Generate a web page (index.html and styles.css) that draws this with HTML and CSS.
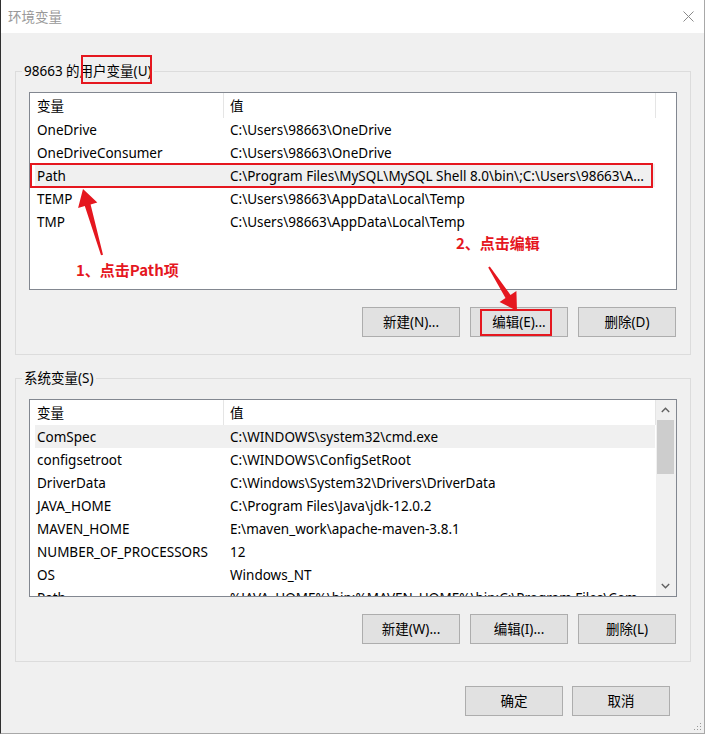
FILE: index.html
```html
<!DOCTYPE html>
<html lang="zh-CN">
<head>
<meta charset="utf-8">
<title>环境变量</title>
<link rel="stylesheet" href="styles.css">
</head>
<body>
<div class="window">
  <div class="titlebar">
    <span class="title">环境变量</span>
    <svg class="close" width="11" height="11" viewBox="0 0 11 11"><path d="M0.5 0.5 L10.5 10.5 M10.5 0.5 L0.5 10.5" stroke="#8a8a8a" stroke-width="1" fill="none"/></svg>
  </div>

  <div class="client">
    <fieldset class="group">
      <legend>98663 的用户变量(U)</legend>
      <div class="list">
        <div class="list-main">
          <div class="list-head">
            <div class="hcell name">变量</div>
            <div class="hcell value">值</div>
          </div>
          <div class="row"><div class="cell name">OneDrive</div><div class="cell value">C:\Users\98663\OneDrive</div></div>
          <div class="row"><div class="cell name">OneDriveConsumer</div><div class="cell value">C:\Users\98663\OneDrive</div></div>
          <div class="row selected"><div class="cell name">Path</div><div class="cell value">C:\Program Files\MySQL\MySQL Shell 8.0\bin\;C:\Users\98663\AppData\Local\Microsoft\WindowsApps;</div></div>
          <div class="row"><div class="cell name">TEMP</div><div class="cell value">C:\Users\98663\AppData\Local\Temp</div></div>
          <div class="row"><div class="cell name">TMP</div><div class="cell value">C:\Users\98663\AppData\Local\Temp</div></div>
        </div>
      </div>
      <div class="buttons">
        <button class="btn">新建(N)...</button>
        <button class="btn">编辑(E)...</button>
        <button class="btn">删除(D)</button>
      </div>
    </fieldset>

    <fieldset class="group system">
      <legend>系统变量(S)</legend>
      <div class="list">
        <div class="list-main">
          <div class="list-head">
            <div class="hcell name">变量</div>
            <div class="hcell value">值</div>
          </div>
          <div class="row selected"><div class="cell name">ComSpec</div><div class="cell value">C:\WINDOWS\system32\cmd.exe</div></div>
          <div class="row"><div class="cell name">configsetroot</div><div class="cell value">C:\WINDOWS\ConfigSetRoot</div></div>
          <div class="row"><div class="cell name">DriverData</div><div class="cell value">C:\Windows\System32\Drivers\DriverData</div></div>
          <div class="row"><div class="cell name">JAVA_HOME</div><div class="cell value">C:\Program Files\Java\jdk-12.0.2</div></div>
          <div class="row"><div class="cell name">MAVEN_HOME</div><div class="cell value">E:\maven_work\apache-maven-3.8.1</div></div>
          <div class="row"><div class="cell name">NUMBER_OF_PROCESSORS</div><div class="cell value">12</div></div>
          <div class="row"><div class="cell name">OS</div><div class="cell value">Windows_NT</div></div>
          <div class="row"><div class="cell name">Path</div><div class="cell value">%JAVA_HOME%\bin;%MAVEN_HOME%\bin;C:\Program Files\Common Files\Oracle\Java\javapath;C:\WINDOWS</div></div>
        </div>
        <div class="scrollbar">
          <div class="sb-btn">
            <svg width="9" height="6" viewBox="0 0 9 6"><path d="M0.8 5 L4.5 1.3 L8.2 5" stroke="#606060" stroke-width="1.4" fill="none"/></svg>
          </div>
          <div class="sb-track"><div class="sb-thumb"></div></div>
          <div class="sb-btn">
            <svg width="9" height="6" viewBox="0 0 9 6"><path d="M0.8 1 L4.5 4.7 L8.2 1" stroke="#606060" stroke-width="1.4" fill="none"/></svg>
          </div>
        </div>
      </div>
      <div class="buttons">
        <button class="btn">新建(W)...</button>
        <button class="btn">编辑(I)...</button>
        <button class="btn">删除(L)</button>
      </div>
    </fieldset>

    <div class="actions">
      <button class="btn">确定</button>
      <button class="btn">取消</button>
    </div>
  </div>

  <svg class="grip" width="10" height="10" viewBox="0 0 10 10">
    <rect x="8" y="2" width="1" height="1" fill="#999"/>
    <rect x="5" y="5" width="1" height="1" fill="#999"/>
    <rect x="8" y="5" width="1" height="1" fill="#999"/>
    <rect x="2" y="8" width="1" height="1" fill="#999"/>
    <rect x="5" y="8" width="1" height="1" fill="#999"/>
    <rect x="8" y="8" width="1" height="1" fill="#999"/>
  </svg>

  <!-- red guide marks drawn over the dialog -->
  <div class="notes">
    <div class="mark mark-legend"></div>
    <div class="mark mark-path"></div>
    <div class="mark mark-edit"></div>
    <div class="note note-1">1、点击Path项</div>
    <div class="note note-2">2、点击编辑</div>
    <svg class="arrows" width="706" height="735" viewBox="0 0 706 735">
      <polygon points="83,189 97.3,202.5 90.6,204.5 103,254.7 101,255.3 84.8,206.1 78.1,208.1" fill="#e5171f"/>
      <polygon points="517,311 516.4,291.1 510.5,294.9 489.8,266.5 488.2,267.5 505.5,298.1 499.6,301.9" fill="#e5171f"/>
    </svg>
  </div>
</div>
</body>
</html>
```

FILE: styles.css
```css
html, body {
  margin: 0;
  padding: 0;
  background: #ffffff;
}

.window {
  position: relative;
  width: 705px;
  height: 734px;
  box-sizing: border-box;
  border-left: 1px solid #2f2f2f;
  border-right: 1px solid #a8a8a8;
  border-bottom: 1px solid #a8a8a8;
  display: flex;
  flex-direction: column;
  font-family: "Noto Sans", "Noto Sans CJK SC", sans-serif;
  font-size: 13.5px;
  color: #000;
  overflow: hidden;
}

/* title bar */
.titlebar {
  height: 33px;
  flex: none;
  background: #ffffff;
  display: flex;
  align-items: center;
  justify-content: space-between;
  padding: 0 10px 0 7px;
}

.title {
  color: #999999;
  line-height: 18px;
}

.close {
  display: block;
  margin-top: -1px;
}

/* dialog client area */
.client {
  flex: 1;
  background: #f0f0f0;
  padding-top: 29px;
  display: flex;
  flex-direction: column;
}

.group {
  margin: 0 13px 0 14px;
  padding: 0 0 17px 0;
  border: 1px solid #dcdcdc;
  min-width: 0;
}

.group.system {
  margin-top: 14px;
}

.group legend {
  margin-left: 6px;
  padding: 0 2px;
  line-height: 18px;
}

.list {
  margin: 12px 13px 0 13px;
  height: 198px;
  box-sizing: border-box;
  border: 1px solid #828790;
  background: #ffffff;
  display: flex;
  overflow: hidden;
}

.list-main {
  flex: 1;
  min-width: 0;
}

.list-head {
  display: flex;
  height: 25px;
}

.hcell {
  box-sizing: border-box;
  height: 25px;
  padding-top: 1px;
  line-height: 25px;
  overflow: hidden;
  border-right: 1px solid #e5e5e5;
  white-space: nowrap;
}

.hcell.name {
  width: 194px;
  padding-left: 7px;
}

.hcell.value {
  width: 432px;
  padding-left: 6px;
}

.row {
  display: grid;
  grid-template-columns: 188px 432px;
  grid-template-rows: 23px;
  width: 620px;
  height: 23px;
  margin-left: 5px;
}

.row.selected {
  background: #f0f0f0;
}

.cell {
  box-sizing: border-box;
  height: 23px;
  padding-top: 1px;
  line-height: 23px;
  white-space: nowrap;
  overflow: hidden;
  text-overflow: ellipsis;
}

.cell.name {
  padding-left: 2px;
}

.cell.value {
  padding-left: 7px;
  padding-right: 6px;
}

/* vertical scrollbar */
.scrollbar {
  width: 20px;
  flex: none;
  background: #f0f0f0;
  display: flex;
  flex-direction: column;
}

.sb-btn {
  height: 20px;
  display: flex;
  align-items: center;
  justify-content: center;
  padding-right: 1px;
}

.sb-track {
  flex: 1;
}

.sb-thumb {
  width: 17px;
  height: 54px;
  margin-left: 1px;
  background: #cdcdcd;
}

/* push buttons */
.buttons {
  display: flex;
  justify-content: flex-end;
  gap: 10px;
  margin: 17px 14px 0 0;
}

.btn {
  width: 98px;
  height: 30px;
  padding: 0;
  margin: 0;
  box-sizing: border-box;
  border: 1px solid #adadad;
  background: #e1e1e1;
  font-family: "Noto Sans", "Noto Sans CJK SC", sans-serif;
  font-size: 13.5px;
  color: #000;
  line-height: 28px;
}

.actions {
  display: flex;
  justify-content: flex-end;
  gap: 9px;
  margin-top: 24px;
  padding-right: 34px;
}

.grip {
  position: absolute;
  right: 2px;
  bottom: 2px;
}

/* red guide marks */
.notes {
  position: absolute;
  left: -1px;
  top: 0;
  width: 706px;
  height: 735px;
  pointer-events: none;
}

.mark {
  position: absolute;
  box-sizing: border-box;
  border: 2px solid #e5171f;
}

.mark-legend {
  left: 81px;
  top: 55px;
  width: 71px;
  height: 29px;
}

.mark-path {
  left: 30px;
  top: 163px;
  width: 623px;
  height: 25px;
}

.mark-edit {
  left: 480px;
  top: 309px;
  width: 72px;
  height: 27px;
}

.note {
  position: absolute;
  font-family: "Noto Sans CJK SC", sans-serif;
  font-weight: bold;
  font-size: 15px;
  line-height: 20px;
  color: #e5171f;
  white-space: nowrap;
}

.note-1 {
  left: 76px;
  top: 260px;
}

.note-2 {
  left: 456px;
  top: 233px;
}

.arrows {
  position: absolute;
  left: 0;
  top: 0;
}
```
